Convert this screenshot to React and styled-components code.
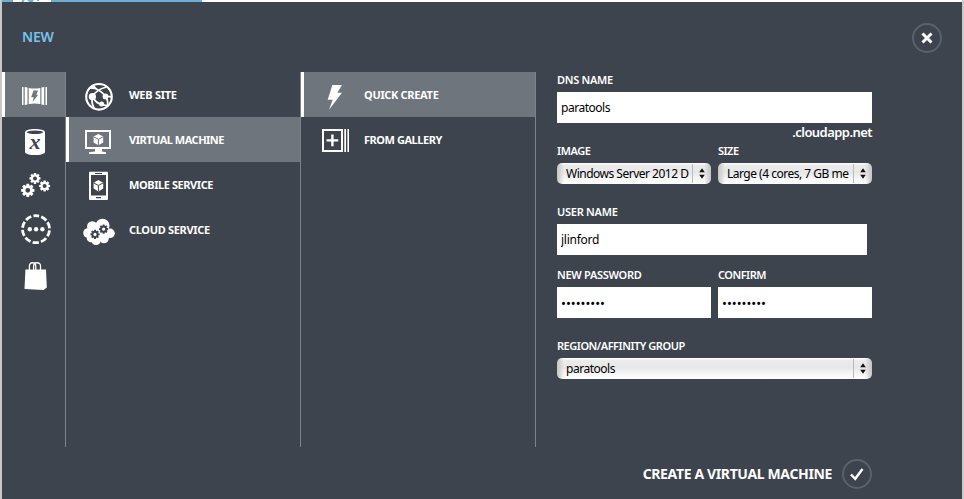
import React from "react";
import styled, { createGlobalStyle } from "styled-components";

const slate = "#3e444e";
const active = "#6e757c";
const rule = "#7d838b";

const GlobalStyle = createGlobalStyle`
  * { box-sizing: border-box; }
  body {
    margin: 0;
    background: #fff;
    font-family: "Noto Sans", "Open Sans", sans-serif;
    overflow: hidden;
  }
`;

const Page = styled.div`
  display: flex;
  flex-direction: column;
  width: 964px;
  height: 499px;
  border-left: 2px solid #c8c8c8;
  border-right: 2px solid #c8c8c8;
  background: #fff;
`;

const PageStrip = styled.div`
  flex: none;
  height: 2px;
  width: 200px;
  padding-left: 11px;
  background: #6fb0d2;
`;

const StripMark = styled.svg`
  display: block;
  width: 38px;
  height: 2px;
  background: #fff;
`;

const Drawer = styled.main`
  flex: 1;
  display: flex;
  flex-direction: column;
  background: ${slate};
`;

const Header = styled.header`
  flex: none;
  display: flex;
  justify-content: space-between;
  align-items: center;
  height: 68px;
  padding: 4px 20px 0 20px;
`;

const Title = styled.h1`
  margin: 0;
  padding-bottom: 3px;
  font-size: 14px;
  line-height: 20px;
  font-weight: 600;
  letter-spacing: -0.2px;
  color: #74c3ec;
`;

const RoundButton = styled.button`
  display: grid;
  place-items: center;
  width: 30px;
  height: 30px;
  padding: 0;
  border: 2px solid #5b616a;
  border-radius: 50%;
  background: transparent;
`;

const Body = styled.div`
  flex: none;
  display: flex;
  height: 377px;
`;

const Column = styled.nav`
  width: ${(p) => p.$width}px;
  height: 375px;
  margin-top: 2px;
  border-right: 1px solid ${rule};
`;

const Item = styled.div`
  display: flex;
  align-items: center;
  height: 45px;
  padding-left: ${(p) => p.$indent}px;
  background: ${(p) => (p.$active ? active : "transparent")};
  box-shadow: ${(p) => (p.$active ? "inset 3px 0 0 #fff" : "none")};
`;

const Glyph = styled.svg`
  flex: none;
  display: block;
  width: 44px;
  height: 45px;
`;

const ItemLabel = styled.span`
  margin-left: ${(p) => p.$gap}px;
  font-size: 11px;
  line-height: 18px;
  font-weight: 700;
  letter-spacing: ${(p) => p.$track}px;
  white-space: nowrap;
  color: #fff;
`;

const Form = styled.form`
  width: 315px;
  margin-left: 21px;
`;

const Split = styled.div`
  display: grid;
  grid-template-columns: 154px 154px;
  gap: 7px;
`;

const Field = styled.div`
  margin-bottom: ${(p) => p.$after || 0}px;
`;

const Label = styled.label`
  display: block;
  height: 22px;
  font-size: 11px;
  line-height: 20px;
  font-weight: 600;
  letter-spacing: ${(p) => p.$track}px;
  white-space: nowrap;
  color: #fff;
`;

const Input = styled.input`
  display: block;
  width: ${(p) => (p.$width ? p.$width + "px" : "100%")};
  height: 31px;
  padding: 0 4px;
  border: 0;
  border-radius: 0;
  outline: 0;
  background: #fff;
  font: 400 ${(p) => p.$size || 12}px/20px "Noto Sans", sans-serif;
  letter-spacing: ${(p) => p.$track || 0}px;
  color: #000;
`;

const Suffix = styled.div`
  height: 18px;
  font-size: 13px;
  line-height: 19px;
  font-weight: 600;
  letter-spacing: -0.55px;
  text-align: right;
  color: #fff;
`;

const SelectBox = styled.div`
  display: flex;
  align-items: center;
  height: 21px;
  padding-left: 9px;
  border-radius: 5px;
  background:
    linear-gradient(90deg, #c4c4c4 0, rgba(225, 225, 225, 0) 7px, rgba(225, 225, 225, 0) calc(100% - 7px), #c4c4c4 100%),
    linear-gradient(#fff 0, #ececec 12%, #e7e7e7 45%, #f4f4f4 70%, #fff 100%);
`;

const SelectText = styled.span`
  flex: 1;
  min-width: 0;
  font-size: 12px;
  line-height: 20px;
  letter-spacing: ${(p) => p.$track}px;
  white-space: nowrap;
  color: #000;
`;

const Stepper = styled.svg`
  flex: none;
  width: 19px;
  height: 19px;
  border-left: 1px solid #b9b9b9;
`;

const Footer = styled.footer`
  flex: 1;
  display: flex;
  justify-content: flex-end;
  align-items: center;
  gap: 10px;
  padding: 1px 90px 0 0;
`;

const Action = styled.span`
  font-size: 14px;
  line-height: 20px;
  font-weight: 700;
  letter-spacing: -0.36px;
  color: #fff;
`;

function gearPath(cx, cy, r, hole, teeth = 8) {
  const inner = r * 0.74;
  const points = [];
  for (let i = 0; i < teeth; i++) {
    const a = (i * 2 * Math.PI) / teeth;
    [[-0.33, inner], [-0.2, r], [0.2, r], [0.33, inner]].forEach(([d, rad]) => {
      points.push(
        `${(cx + rad * Math.sin(a + d)).toFixed(2)} ${(cy - rad * Math.cos(a + d)).toFixed(2)}`
      );
    });
  }
  return `M${points.join("L")}Z M${cx - hole} ${cy}a${hole} ${hole} 0 1 0 ${hole * 2} 0a${hole} ${hole} 0 1 0 ${-hole * 2} 0Z`;
}

const Gear = ({ x, y, r, hole, fill = "#fff" }) => (
  <path d={gearPath(x, y, r, hole)} fill={fill} fillRule="evenodd" />
);

const Cube = ({ x, y, line }) => (
  <g transform={`translate(${x} ${y})`}>
    <path d="M0-5.6L4.8-3V2.9L0 5.7L-4.8 2.9V-3Z" fill="#fff" />
    <path d="M-4.6-2.7L0-.3L4.6-2.7M0-.3V5.4" fill="none" stroke={line} strokeWidth="1" />
  </g>
);

const ComputeIcon = () => (
  <Glyph viewBox="0 0 44 45">
    <path
      fill="#fff"
      d="M8 15h1.5v18H8zM10.7 15l2.8.5v17l-2.8.5zM14.7 15.9q5.8 1 11.6 0v16.2q-5.8-1-11.6 0zM27.4 15.5l2.8-.5v18l-2.8-.5zM31.5 15H33v18h-1.5z"
    />
    <path fill={active} d="M19.5 18.5h4.6l-1.9 4.2h2l-5.7 7.2 1.3-4.7h-2.6z" />
  </Glyph>
);

const DatabaseIcon = () => (
  <Glyph viewBox="0 0 44 45">
    <path fill="#fff" d="M11 15.2C11 11 31 11 31 15.2V35c0 4.1-20 4.1-20 0z" />
    <ellipse cx="21" cy="15.3" rx="8" ry="1.8" fill={slate} />
    <text
      x="20.9"
      y="32"
      textAnchor="middle"
      fontFamily="Liberation Serif, serif"
      fontStyle="italic"
      fontWeight="700"
      fontSize="22"
      fill={slate}
    >
      x
    </text>
  </Glyph>
);

const GearsIcon = () => (
  <Glyph viewBox="0 0 44 45">
    <Gear x={21} y={16.4} r={5.6} hole={2} />
    <Gear x={30.6} y={24} r={5.6} hole={2} />
    <Gear x={13.8} y={28.3} r={6.8} hole={2.4} />
  </Glyph>
);

const NetworkIcon = () => (
  <Glyph viewBox="0 0 44 45">
    <circle
      cx="22"
      cy="22.2"
      r="13.5"
      fill="none"
      stroke="#fff"
      strokeWidth="2.8"
      strokeDasharray="6.3 2.182"
      strokeDashoffset="3.15"
      transform="rotate(-90 22 22.2)"
    />
    <circle cx="15.8" cy="22.2" r="2.2" fill="#fff" />
    <circle cx="22.1" cy="22.2" r="2.2" fill="#fff" />
    <circle cx="28.4" cy="22.2" r="2.2" fill="#fff" />
  </Glyph>
);

const BagIcon = () => (
  <Glyph viewBox="0 0 44 45">
    <path fill="#fff" d="M11.4 17.4H32l.8 18.2-3.2 2.4-19.1-1z" />
    <path
      fill="none"
      stroke="#fff"
      strokeWidth="1.3"
      d="M15.4 18v-3.6c0-4.8 6.4-4.8 6.4-.4v4M19.6 18v-3.6c0-4.8 6.9-4.8 6.9-.4v4"
    />
  </Glyph>
);

const WebIcon = () => (
  <Glyph viewBox="0 0 44 45">
    <circle cx="22" cy="24.8" r="12.8" fill="none" stroke="#fff" strokeWidth="2.1" />
    <path
      fill="none"
      stroke="#fff"
      strokeWidth="1.8"
      d="M15 14.8C20 17 25 19.5 28.4 24.2C30.6 27 31 30 30.5 33.5M15.3 24.7C17.5 20.5 21.5 17 29.5 15M15.3 24.7C18 29.5 21 31.5 24.4 32.3L31 34M15.3 24.7C14.6 29 15 32.5 17 36M28.4 24.2L34.2 24.8"
    />
    <circle cx="15.4" cy="24.7" r="3.6" fill="#fff" />
    <circle cx="28.5" cy="24.4" r="2.9" fill="#fff" />
    <circle cx="24.6" cy="32" r="2.5" fill="#fff" />
    <path fill="#fff" d="M12.4 16.8l4.2-4.2 4 5z" />
  </Glyph>
);

const MachineIcon = () => (
  <Glyph viewBox="0 0 44 45">
    <path
      fill="#fff"
      fillRule="evenodd"
      d="M8 13h26v19H8zM10 15v15h22V15zM18 32h7v2.4l4 .8V37H12v-1.8l6-.8z"
    />
    <Cube x={21.4} y={22.6} line={active} />
  </Glyph>
);

const MobileIcon = () => (
  <Glyph viewBox="0 0 44 45">
    <path
      fill="#fff"
      fillRule="evenodd"
      d="M13 9.8h17q1 0 1 1V37q0 1-1 1H13q-1 0-1-1V10.8q0-1 1-1zM14 13v20.5h15V13zM18 11v1h7v-1zM19 35v1.2h5V35z"
    />
    <Cube x={21.4} y={23.7} line={slate} />
  </Glyph>
);

const CloudIcon = () => (
  <Glyph viewBox="0 0 44 45">
    <g fill="#fff">
      <circle cx="15.3" cy="19.5" r="5.3" />
      <circle cx="25.5" cy="18.7" r="7" />
      <circle cx="11" cy="26" r="4.8" />
      <circle cx="14" cy="31" r="4.3" />
      <circle cx="19" cy="33.3" r="4.8" />
      <circle cx="27" cy="31.5" r="4.8" />
      <circle cx="33" cy="26.3" r="4.8" />
      <path d="M12 19h18l4 8-4 6H13z" />
    </g>
    <Gear x={18} y={27.4} r={4.7} hole={1.6} fill={slate} />
    <Gear x={26.6} y={22.1} r={4.7} hole={1.6} fill={slate} />
  </Glyph>
);

const BoltIcon = () => (
  <Glyph viewBox="0 0 44 45">
    <path fill="#fff" d="M19.3 13H29l-4.7 7.8H29L16 37.8l3.7-10.1h-5z" />
  </Glyph>
);

const GalleryIcon = () => (
  <Glyph viewBox="0 0 44 45">
    <path
      fill="#fff"
      fillRule="evenodd"
      d="M9 12h21v23H9zM11 14v19h17V14zM31.3 12H33v23h-1.7zM34.4 12H36v23h-1.6zM18.2 17.6h2.4v4.6h4.7v2.4h-4.7v4.6h-2.4v-4.6h-4.7v-2.4h4.7z"
    />
  </Glyph>
);

const categories = [
  [ComputeIcon, true],
  [DatabaseIcon],
  [GearsIcon],
  [NetworkIcon],
  [BagIcon],
];

const services = [
  { name: "WEB SITE", Icon: WebIcon, track: -0.27 },
  { name: "VIRTUAL MACHINE", Icon: MachineIcon, track: -0.5, active: true },
  { name: "MOBILE SERVICE", Icon: MobileIcon, track: -0.42 },
  { name: "CLOUD SERVICE", Icon: CloudIcon, track: -0.33 },
];

const methods = [
  { name: "QUICK CREATE", Icon: BoltIcon, track: -0.32, active: true },
  { name: "FROM GALLERY", Icon: GalleryIcon, track: -0.45 },
];

const MenuColumn = ({ items, indent, gap }) => (
  <Column $width={235}>
    {items.map(({ name, Icon, track, active: on }) => (
      <Item key={name} $indent={indent} $active={on}>
        <Icon />
        <ItemLabel $gap={gap} $track={track}>{name}</ItemLabel>
      </Item>
    ))}
  </Column>
);

const Select = ({ value, track = 0 }) => (
  <SelectBox>
    <SelectText $track={track}>{value}</SelectText>
    <Stepper viewBox="0 0 18 19">
      <path d="M6.2 8.3L9 4.2l2.8 4.1zM6.2 10.7L9 14.8l2.8-4.1z" fill="#111" />
    </Stepper>
  </SelectBox>
);

export default function App() {
  return (
    <Page>
      <GlobalStyle />
      <PageStrip>
        <StripMark viewBox="0 0 38 2">
          <path d="M11 0l-2 2M15 0l4 2M20 0l-2 2M24 0h2" stroke="#6fb0d2" strokeWidth="2" />
        </StripMark>
      </PageStrip>
      <Drawer>
        <Header>
          <Title>NEW</Title>
          <RoundButton type="button" aria-label="Close">
            <svg width="12" height="12" viewBox="0 0 12 12">
              <path d="M1.5 1.5l9 9M10.5 1.5l-9 9" stroke="#fff" strokeWidth="3" />
            </svg>
          </RoundButton>
        </Header>
        <Body>
          <Column $width={64}>
            {categories.map(([Icon, on], i) => (
              <Item key={i} $indent={12} $active={on}>
                <Icon />
              </Item>
            ))}
          </Column>
          <MenuColumn items={services} indent={11} gap={8} />
          <MenuColumn items={methods} indent={12} gap={7} />
          <Form>
            <Field>
              <Label $track={-0.3}>DNS NAME</Label>
              <Input defaultValue="paratools" $track={-0.48} />
              <Suffix>.cloudapp.net</Suffix>
            </Field>
            <Split>
              <Field $after={18}>
                <Label $track={-0.4}>IMAGE</Label>
                <Select value="Windows Server 2012 D" track={-0.5} />
              </Field>
              <Field $after={18}>
                <Label $track={-0.5}>SIZE</Label>
                <Select value="Large (4 cores, 7 GB me" track={-0.5} />
              </Field>
            </Split>
            <Field $after={10}>
              <Label $track={-0.25}>USER NAME</Label>
              <Input $width={310} defaultValue="jlinford" $track={-0.25} />
            </Field>
            <Split>
              <Field $after={18}>
                <Label $track={-0.3}>NEW PASSWORD</Label>
                <Input defaultValue="•••••••••" $size={13} />
              </Field>
              <Field $after={18}>
                <Label $track={-0.5}>CONFIRM</Label>
                <Input defaultValue="•••••••••" $size={13} />
              </Field>
            </Split>
            <Field>
              <Label $track={-0.47}>REGION/AFFINITY GROUP</Label>
              <Select value="paratools" track={-0.48} />
            </Field>
          </Form>
        </Body>
        <Footer>
          <Action>CREATE A VIRTUAL MACHINE</Action>
          <RoundButton type="button" aria-label="Create">
            <svg width="16" height="16" viewBox="0 0 16 16">
              <path d="M2 8.5l4.2 4.3L13.5 3" fill="none" stroke="#fff" strokeWidth="2.4" />
            </svg>
          </RoundButton>
        </Footer>
      </Drawer>
    </Page>
  );
}
